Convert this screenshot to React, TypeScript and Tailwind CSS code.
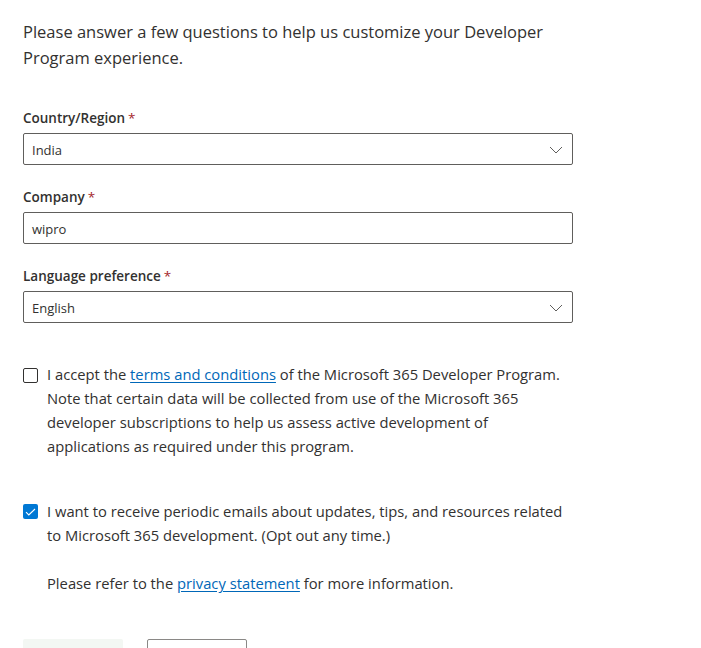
import React from "react";

const font = { fontFamily: '"Open Sans", "Noto Sans", "Liberation Sans", sans-serif' };

function Label({ text }: { text: string }) {
  return (
    <div className="h-5 pt-[1px] flex items-center text-[13.5px] font-semibold text-[#323130]">
      {text}
      <span className="ml-[3px] text-[#a4262c] font-normal">*</span>
    </div>
  );
}

function Chevron() {
  return (
    <svg width="14" height="8" viewBox="0 0 14 8" fill="none" className="absolute right-[9px] top-[12px]">
      <path d="M1 1l6 6 6-6" stroke="#605e5c" strokeWidth="1" />
    </svg>
  );
}

function Field({ value, select }: { value: string; select?: boolean }) {
  return (
    <div className="relative mt-[5px] h-8 w-[550px] rounded-[2px] border border-[#605e5c] bg-white flex items-center pl-[8px] pt-[3px] text-[13px] text-[#323130]">
      {value}
      {select && <Chevron />}
    </div>
  );
}

export default function App() {
  return (
    <div className="min-h-[648px] bg-white" style={font}>
      <div className="pl-[23px] pt-[19px] w-[640px] text-[#323130]">
        <p className="text-[16.5px] leading-[26px]">
          Please answer a few questions to help us customize your Developer
          <br />
          Program experience.
        </p>

        <div className="mt-[37px]">
          <Label text="Country/Region" />
          <Field value="India" select />
        </div>
        <div className="mt-[22px]">
          <Label text="Company" />
          <Field value="wipro" />
        </div>
        <div className="mt-[22px]">
          <Label text="Language preference" />
          <Field value="English" select />
        </div>

        <div className="mt-[39px] flex items-start text-[14.75px] leading-[24px]">
          <div className="mt-[6px] h-[15px] w-[15px] shrink-0 rounded-[2px] border border-[#323130] bg-white" />
          <div className="ml-[9px] w-[560px]">
            I accept the{" "}
            <a className="text-[#0067b8] underline underline-offset-2">terms and conditions</a> of the Microsoft 365
            Developer Program.
            <br />
            Note that certain data will be collected from use of the Microsoft 365
            <br />
            developer subscriptions to help us assess active development of
            <br />
            applications as required under this program.
          </div>
        </div>

        <div className="mt-[41px] flex items-start text-[14.75px] leading-[24px]">
          <div className="mt-[5px] h-[15px] w-[15px] shrink-0 rounded-[2px] bg-[#0078d4] flex items-center justify-center">
            <svg width="11" height="8" viewBox="0 0 11 8" fill="none">
              <path d="M1 4.2l2.8 2.8L10 1" stroke="white" strokeWidth="1.1" />
            </svg>
          </div>
          <div className="ml-[9px] w-[560px]">
            I want to receive periodic emails about updates, tips, and resources related
            <br />
            to Microsoft 365 development. (Opt out any time.)
            <br />
            <br />
            Please refer to the{" "}
            <a className="text-[#0067b8] underline underline-offset-2">privacy statement</a> for more information.
          </div>
        </div>

        <div className="mt-[44px] flex gap-[24px]">
          <div className="h-8 w-[100px] rounded-[2px] bg-[#f3f7f3]" />
          <div className="h-8 w-[100px] rounded-[2px] border border-[#8a8886] bg-white" />
        </div>
      </div>
    </div>
  );
}
